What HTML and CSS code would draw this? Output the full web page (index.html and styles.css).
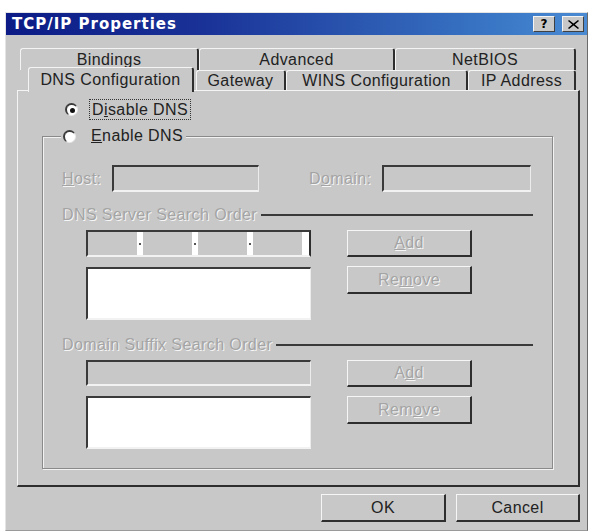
FILE: index.html
```html
<!DOCTYPE html>
<html>
<head>
<meta charset="utf-8">
<link rel="stylesheet" href="styles.css">
</head>
<body>
<div class="window">
  <div class="titlebar">
    <span class="title">TCP/IP Properties</span>
    <div class="tb-buttons">
      <span class="tb-btn help">?</span>
      <span class="tb-btn close"><svg width="11" height="9" viewBox="0 0 11 9"><path d="M1 0 L5.5 3.5 L10 0 L11 1 L6.8 4.5 L11 8 L10 9 L5.5 5.5 L1 9 L0 8 L4.2 4.5 L0 1 Z" fill="#000"/></svg></span>
    </div>
  </div>
  <div class="body">
    <div class="tabs">
      <div class="tabrow back">
        <div class="tab t-bind">Bindings</div>
        <div class="tab t-adv">Advanced</div>
        <div class="tab t-net">NetBIOS</div>
      </div>
      <div class="tabrow front">
        <div class="tab sel t-dns">DNS Configuration</div>
        <div class="tab t-gw">Gateway</div>
        <div class="tab t-wins">WINS Configuration</div>
        <div class="tab t-ip">IP Address</div>
      </div>
    </div>
    <div class="panel">
      <div class="radio-row disable">
        <span class="radio checked"></span>
        <span class="focus">D<u>i</u>sable DNS</span>
      </div>
      <div class="group">
        <div class="legend">
          <span class="radio"></span>
          <span class="legend-text"><u>E</u>nable DNS</span>
        </div>
        <div class="host-row">
          <span class="dis lbl-host"><u>H</u>ost:</span>
          <div class="field host-field"></div>
          <span class="dis lbl-domain">D<u>o</u>main:</span>
          <div class="field domain-field"></div>
        </div>
        <div class="section-head">
          <span class="dis">DNS Server Search Order</span>
          <span class="rule"></span>
        </div>
        <div class="block">
          <div class="col-left">
            <div class="field ipfield">
              <span class="seg"></span><span class="sep"><i></i></span>
              <span class="seg"></span><span class="sep"><i></i></span>
              <span class="seg"></span><span class="sep"><i></i></span>
              <span class="seg"></span><span class="tail"></span>
            </div>
            <div class="field list"></div>
          </div>
          <div class="col-right">
            <div class="btn dis-btn"><u>A</u>dd</div>
            <div class="btn dis-btn remove">Re<u>m</u>ove</div>
          </div>
        </div>
        <div class="section-head second">
          <span class="dis">Domain Suffix Search Order</span>
          <span class="rule"></span>
        </div>
        <div class="block">
          <div class="col-left">
            <div class="field suffix-field"></div>
            <div class="field list"></div>
          </div>
          <div class="col-right">
            <div class="btn dis-btn add2">A<u>d</u>d</div>
            <div class="btn dis-btn remove">Rem<u>o</u>ve</div>
          </div>
        </div>
      </div>
    </div>
    <div class="actions">
      <div class="btn ok">OK</div>
      <div class="btn cancel">Cancel</div>
    </div>
  </div>
</div>
</body>
</html>
```

FILE: styles.css
```css
html, body {
  margin: 0;
  padding: 0;
  background: #ffffff;
}

body {
  font-family: "Liberation Sans", Arial, sans-serif;
  font-size: 16px;
  letter-spacing: 0.4px;
  color: #222222;
}

.window {
  box-sizing: border-box;
  margin: 12px 0 0 5px;
  width: 583px;
  height: 519px;
  background: #c8c8c8;
  border-top: 1px solid #e4e4e4;
  border-left: 1px solid #e4e4e4;
  border-right: 1px solid #6a6a6a;
  border-bottom: 1px solid #9a9a9a;
  display: flex;
  flex-direction: column;
}

.titlebar {
  height: 22px;
  background: linear-gradient(to right, #0c1b86 0%, #1a3398 35%, #3a78c6 85%, #4a8ad2 100%);
  display: flex;
  align-items: center;
  justify-content: space-between;
  padding: 0 3px 0 6px;
}

.title {
  font-family: "DejaVu Sans", sans-serif;
  font-weight: bold;
  font-size: 15px;
  letter-spacing: 1px;
  color: #ffffff;
}

.tb-buttons {
  display: flex;
  gap: 7px;
  align-items: center;
}

.tb-btn {
  box-sizing: border-box;
  width: 22px;
  height: 16px;
  background: #c8c8c8;
  border-top: 1px solid #f4f4f4;
  border-left: 1px solid #f4f4f4;
  border-right: 1px solid #404040;
  border-bottom: 1px solid #404040;
  display: flex;
  align-items: center;
  justify-content: center;
}

.tb-btn.help {
  font-family: "DejaVu Sans", sans-serif;
  font-weight: bold;
  font-size: 12px;
  letter-spacing: 0;
  color: #000;
  line-height: 1;
}

.body {
  flex: 1;
  display: flex;
  flex-direction: column;
  padding: 13px 7px 0 11px;
}

.tabs {
  display: flex;
  flex-direction: column;
}

.tabrow {
  display: flex;
}

.tabrow.back {
  margin-left: 3px;
  height: 22px;
}

.tabrow.front {
  margin-left: 11px;
  height: 20px;
}

.tab {
  box-sizing: border-box;
  background: #c8c8c8;
  border-top: 1px solid #f4f4f4;
  border-left: 1px solid #f4f4f4;
  border-right: 2px solid #2e2e2e;
  border-radius: 3px 3px 0 0;
  text-align: center;
  white-space: nowrap;
}

.tabrow.back .tab {
  height: 22px;
  line-height: 21px;
}

.tabrow.front .tab {
  height: 20px;
  line-height: 19px;
}

.t-bind { width: 179px; }
.t-adv { width: 196px; }
.t-net { width: 181px; }

.t-dns { width: 166px; }
.t-gw { width: 90px; margin-left: 2px; }
.t-wins { width: 182px; }
.t-ip { width: 108px; }

.tabrow.front .tab.sel {
  position: relative;
  z-index: 1;
  height: 25px;
  margin-top: -3px;
  line-height: 24px;
}

.panel {
  box-sizing: border-box;
  height: 397px;
  border-top: 1px solid #f4f4f4;
  border-left: 1px solid #f4f4f4;
  border-right: 2px solid #2e2e2e;
  border-bottom: 2px solid #2e2e2e;
  padding: 8px 0 0 24px;
  display: flex;
  flex-direction: column;
}

.radio-row {
  display: flex;
  align-items: center;
  height: 21px;
  margin-left: 23px;
}

.radio {
  box-sizing: border-box;
  width: 13px;
  height: 13px;
  border-radius: 50%;
  background: #ffffff;
  border-top: 2px solid #3a3a3a;
  border-left: 2px solid #3a3a3a;
  border-right: 1px solid #e8e8e8;
  border-bottom: 1px solid #e8e8e8;
  display: flex;
  align-items: center;
  justify-content: center;
  flex: none;
}

.radio.checked::after {
  content: "";
  width: 5px;
  height: 5px;
  border-radius: 50%;
  background: #111;
}

.focus {
  margin-left: 11px;
  padding: 0 2px;
  line-height: 19px;
  border: 1px dotted #333;
}

.group {
  box-sizing: border-box;
  margin-top: 16px;
  width: 511px;
  height: 333px;
  border: 1px solid #8a8a8a;
  box-shadow: inset 1px 1px 0 #f2f2f2, 1px 1px 0 #f2f2f2;
  padding: 0 20px 0 19px;
  display: flex;
  flex-direction: column;
}

.legend {
  display: flex;
  align-items: center;
  align-self: flex-start;
  height: 20px;
  margin-top: -11px;
  margin-left: -1px;
  padding: 0 3px 0 2px;
  background: #c8c8c8;
}

.legend-text {
  margin-left: 15px;
}

.dis {
  color: #a4a4a4;
  text-shadow: 1px 1px 0 #f6f6f6;
  white-space: nowrap;
}

.host-row {
  display: flex;
  align-items: center;
  margin-top: 19px;
  height: 27px;
}

.lbl-host {
  width: 50px;
}

.field {
  box-sizing: border-box;
  background: #c8c8c8;
  border-top: 2px solid #3a3a3a;
  border-left: 2px solid #3a3a3a;
  border-right: 1px solid #ececec;
  border-bottom: 2px solid #f2f2f2;
}

.host-field {
  width: 147px;
  height: 27px;
}

.lbl-domain {
  margin-left: 50px;
  width: 73px;
}

.domain-field {
  width: 149px;
  height: 27px;
}

.section-head {
  display: flex;
  align-items: center;
  height: 20px;
  margin-top: 13px;
}

.section-head.second {
  margin-top: 15px;
}

.rule {
  flex: 1;
  height: 0;
  border-top: 2px solid #3a3a3a;
  margin-left: 4px;
  margin-right: -1px;
}

.block {
  display: flex;
  margin-top: 5px;
  margin-left: 24px;
}

.col-left {
  width: 225px;
  display: flex;
  flex-direction: column;
  gap: 10px;
}

.col-right {
  margin-left: 36px;
  display: flex;
  flex-direction: column;
  gap: 9px;
}

.ipfield {
  height: 27px;
  display: flex;
  border-right: 2px solid #2e2e2e;
}

.ipfield .seg {
  flex: 1;
}

.ipfield .sep {
  width: 6px;
  background: #ffffff;
  display: flex;
  align-items: center;
  justify-content: center;
}

.ipfield .sep i {
  width: 2px;
  height: 2px;
  background: #555;
}

.ipfield .tail {
  width: 7px;
  background: #ffffff;
}

.list {
  height: 53px;
  background: #ffffff;
}

.suffix-field {
  height: 26px;
}

.btn {
  box-sizing: border-box;
  width: 125px;
  height: 28px;
  background: #c8c8c8;
  border-top: 1px solid #f6f6f6;
  border-left: 1px solid #f6f6f6;
  border-right: 2px solid #2e2e2e;
  border-bottom: 2px solid #2e2e2e;
  display: flex;
  align-items: center;
  justify-content: center;
}

.dis-btn {
  color: #a4a4a4;
  text-shadow: 1px 1px 0 #f6f6f6;
  height: 27px;
}

.dis-btn.remove {
  height: 28px;
}

.actions {
  display: flex;
  justify-content: flex-end;
  gap: 10px;
  margin-top: 7px;
}

.btn.ok {
  width: 125px;
  height: 28px;
}

.btn.cancel {
  width: 124px;
  height: 28px;
}
```
